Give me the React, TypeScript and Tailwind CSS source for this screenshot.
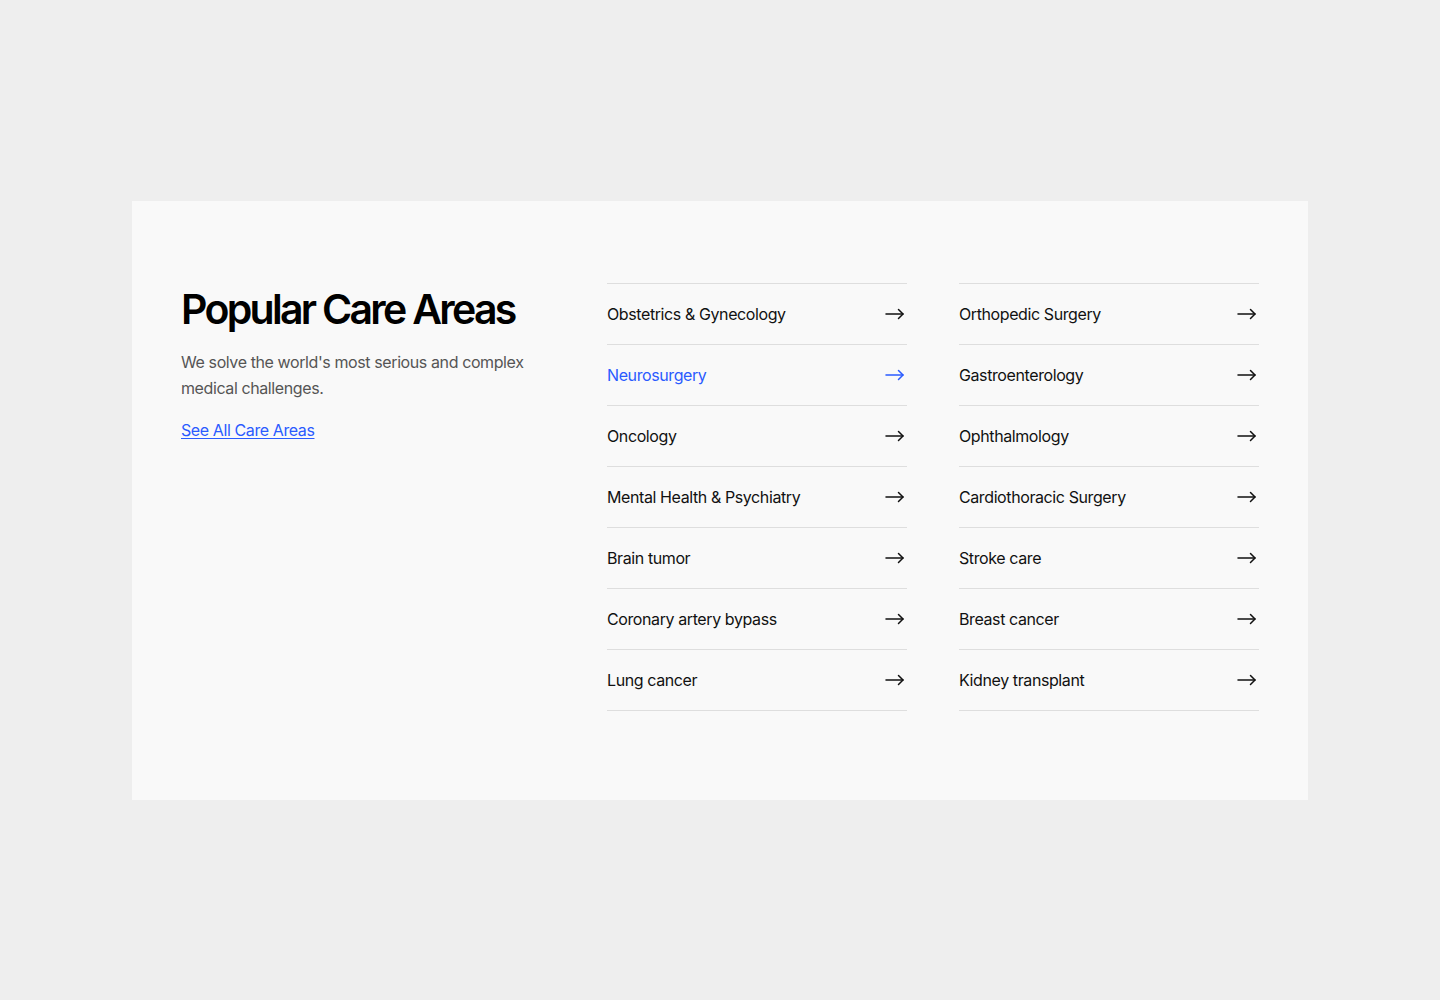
const leftItems = [
  'Obstetrics & Gynecology',
  'Neurosurgery',
  'Oncology',
  'Mental Health & Psychiatry',
  'Brain tumor',
  'Coronary artery bypass',
  'Lung cancer',
]

const rightItems = [
  'Orthopedic Surgery',
  'Gastroenterology',
  'Ophthalmology',
  'Cardiothoracic Surgery',
  'Stroke care',
  'Breast cancer',
  'Kidney transplant',
]

function Arrow() {
  return (
    <svg width="20" height="12" viewBox="0 0 20 12" fill="none" stroke="currentColor" strokeWidth="1.5" strokeLinecap="round" strokeLinejoin="round" className="mr-[2px]">
      <path d="M1 6h17" />
      <path d="M13.5 1.5L18 6l-4.5 4.5" />
    </svg>
  )
}

function CareList({ items, active }: { items: string[]; active?: string }) {
  return (
    <ul className="w-[300px] border-t border-[#dedede]">
      {items.map((item) => {
        const on = item === active
        return (
          <li key={item} className="border-b border-[#dedede]">
            <a
              href="#"
              className={
                on
                  ? 'flex h-[60px] items-center justify-between text-[16px] tracking-[-0.025em] text-[#2a5bff]'
                  : 'flex h-[60px] items-center justify-between text-[16px] tracking-[-0.025em] text-[#111111]'
              }
            >
              <span>{item}</span>
              <Arrow />
            </a>
          </li>
        )
      })}
    </ul>
  )
}

export default function App() {
  return (
    <div
      className="flex min-h-screen items-center justify-center bg-[#eeeeee]"
      style={{ fontFamily: 'Inter, "Liberation Sans", sans-serif' }}
    >
      <section className="flex h-[599px] w-[1176px] bg-[#f9f9f9] px-[49px] pt-[82px]">
        <div className="w-[426px] shrink-0">
          <h2 className="text-[41px] font-semibold leading-[52px] tracking-[-0.066em] text-black">
            Popular Care Areas
          </h2>
          <p className="mt-[14px] w-[350px] text-[16px] leading-[26px] tracking-[-0.025em] text-[#555555]">
            We solve the world's most serious and complex medical challenges.
          </p>
          <a href="#" className="mt-[17px] inline-block text-[16px] tracking-[-0.025em] text-[#2a5bff] underline underline-offset-2">
            See All Care Areas
          </a>
        </div>
        <div className="flex gap-[52px]">
          <CareList items={leftItems} active="Neurosurgery" />
          <CareList items={rightItems} />
        </div>
      </section>
    </div>
  )
}
